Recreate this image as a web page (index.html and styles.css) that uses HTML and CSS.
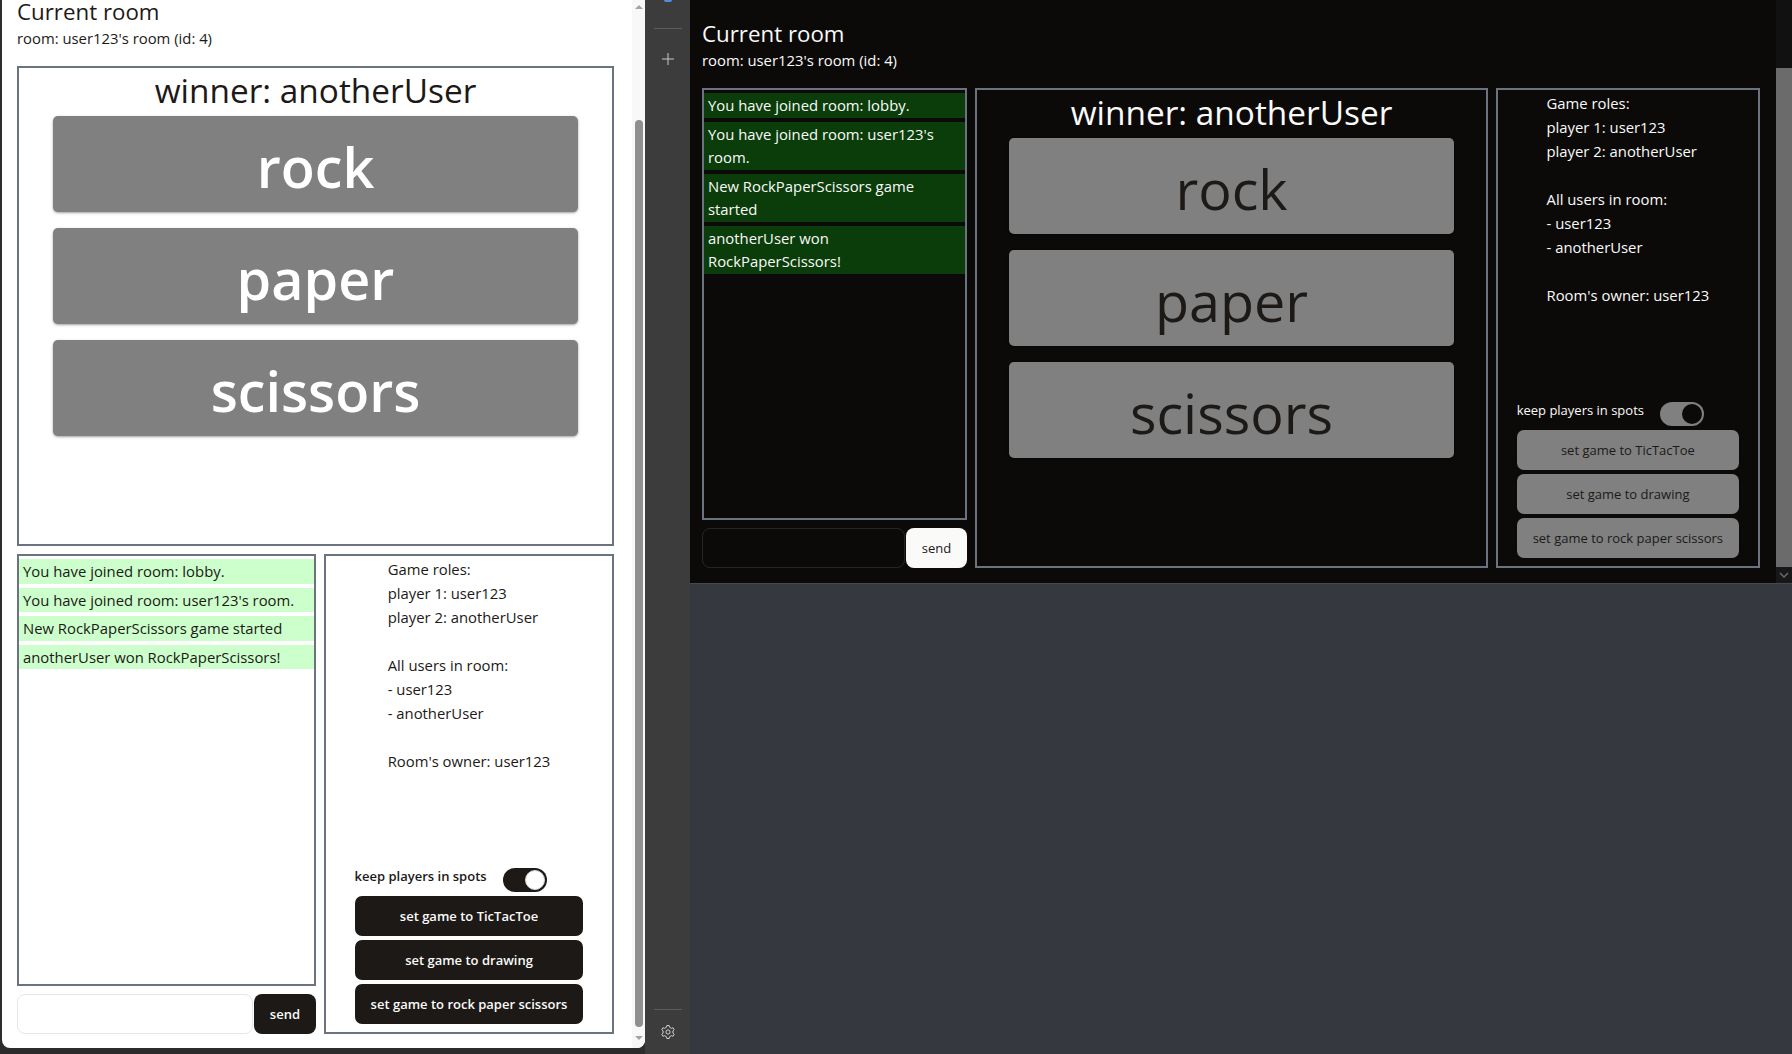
FILE: index.html
```html
<!DOCTYPE html>
<html lang="en">
<head>
<meta charset="utf-8">
<title>Current room</title>
<link rel="stylesheet" href="styles.css">
</head>
<body>
<div class="screen">
  <div class="left-wrap">
    <div class="left-panel">
      <div class="left-view">
        <div class="room room-light scrolled">
          <h1 class="room-title">Current room</h1>
          <div class="room-sub">room: user123's room (id: 4)</div>
          <div class="game-box">
            <div class="winner">winner: anotherUser</div>
            <button class="rps">rock</button>
            <button class="rps">paper</button>
            <button class="rps">scissors</button>
          </div>
          <div class="bottom-row">
            <div class="chat-col">
              <div class="chat-box">
                <div class="msg">You have joined room: lobby.</div>
                <div class="msg">You have joined room: user123's room.</div>
                <div class="msg">New RockPaperScissors game started</div>
                <div class="msg">anotherUser won RockPaperScissors!</div>
              </div>
              <div class="chat-input-row">
                <input class="chat-input" type="text">
                <button class="send">send</button>
              </div>
            </div>
            <div class="info-box">
              <div class="info-text">
                <div>Game roles:</div>
                <div>player 1: user123</div>
                <div>player 2: anotherUser</div>
                <div class="blank"></div>
                <div>All users in room:</div>
                <div>- user123</div>
                <div>- anotherUser</div>
                <div class="blank"></div>
                <div>Room's owner: user123</div>
              </div>
              <div class="controls">
                <div class="keep-row">
                  <span class="keep-label">keep players in spots</span>
                  <span class="toggle"><span class="knob"></span></span>
                </div>
                <button class="ctrl">set game to TicTacToe</button>
                <button class="ctrl">set game to drawing</button>
                <button class="ctrl">set game to rock paper scissors</button>
              </div>
            </div>
          </div>
        </div>
      </div>
      <div class="vscroll-light">
        <div class="sb-up"><span class="tri-up"></span></div>
        <div class="sb-thumb-light"></div>
        <div class="sb-down"><span class="tri-down"></span></div>
      </div>
    </div>
  </div>

  <div class="strip">
    <div class="strip-top-icon"></div>
    <div class="strip-divider top-div"></div>
    <svg class="strip-plus" width="14" height="14" viewBox="0 0 14 14"><path d="M7 1v12M1 7h12" stroke="#c8c8c8" stroke-width="1" fill="none"/></svg>
    <div class="strip-spacer"></div>
    <div class="strip-divider"></div>
    <svg class="strip-gear" width="16" height="16" viewBox="0 0 16 16"><path d="M6.455 3.245L6.854 1.5L9.146 1.5L9.545 3.245L11.345 4.285L13.056 3.756L14.204 5.743L12.89 6.96L12.89 9.04L14.204 10.257L13.056 12.244L11.345 11.715L9.545 12.755L9.146 14.5L6.854 14.5L6.455 12.755L4.655 11.715L2.944 12.244L1.796 10.257L3.11 9.04L3.11 6.96L1.796 5.743L2.944 3.756L4.655 4.285Z" fill="none" stroke="#cfcfcf" stroke-width="1" stroke-linejoin="round"/><circle cx="8" cy="8" r="2.1" fill="none" stroke="#cfcfcf" stroke-width="1"/></svg>
  </div>

  <div class="right-area">
    <div class="right-page">
      <div class="right-view">
        <div class="room room-dark">
          <h1 class="room-title">Current room</h1>
          <div class="room-sub">room: user123's room (id: 4)</div>
          <div class="main-row">
            <div class="chat-col">
              <div class="chat-box">
                <div class="msg">You have joined room: lobby.</div>
                <div class="msg">You have joined room: user123's room.</div>
                <div class="msg">New RockPaperScissors game started</div>
                <div class="msg">anotherUser won RockPaperScissors!</div>
              </div>
              <div class="chat-input-row">
                <input class="chat-input" type="text">
                <button class="send">send</button>
              </div>
            </div>
            <div class="game-box">
              <div class="winner">winner: anotherUser</div>
              <button class="rps">rock</button>
              <button class="rps">paper</button>
              <button class="rps">scissors</button>
            </div>
            <div class="info-box">
              <div class="info-text">
                <div>Game roles:</div>
                <div>player 1: user123</div>
                <div>player 2: anotherUser</div>
                <div class="blank"></div>
                <div>All users in room:</div>
                <div>- user123</div>
                <div>- anotherUser</div>
                <div class="blank"></div>
                <div>Room's owner: user123</div>
              </div>
              <div class="controls">
                <div class="keep-row">
                  <span class="keep-label">keep players in spots</span>
                  <span class="toggle"><span class="knob"></span></span>
                </div>
                <button class="ctrl">set game to TicTacToe</button>
                <button class="ctrl">set game to drawing</button>
                <button class="ctrl">set game to rock paper scissors</button>
              </div>
            </div>
          </div>
        </div>
      </div>
      <div class="vscroll-dark">
        <div class="sb-thumb-dark"></div>
        <div class="sb-arrow-dark">
          <svg width="10" height="6" viewBox="0 0 10 6"><path d="M1 1l4 4 4-4" stroke="#6a6a6a" stroke-width="1.5" fill="none"/></svg>
        </div>
      </div>
    </div>
  </div>
</div>
</body>
</html>
```

FILE: styles.css
```css
* { box-sizing: border-box; }

html, body {
  margin: 0;
  padding: 0;
}

body {
  width: 1792px;
  height: 1054px;
  overflow: hidden;
  background: #2c2c2c;
  font-family: "Open Sans", "Noto Sans", sans-serif;
}

.screen {
  display: flex;
  width: 1792px;
  height: 1054px;
}

/* ---------- left (light) pane ---------- */
.left-wrap {
  width: 645px;
  flex: none;
  padding-left: 2px;
  background: #2c2c2c;
}

.left-panel {
  height: 1048px;
  background: #ffffff;
  border-radius: 0 0 8px 8px;
  display: flex;
  overflow: hidden;
}

.left-view {
  flex: 1;
  min-width: 0;
  overflow: hidden;
  padding: 0 18px 0 15px;
}

.scrolled { margin-top: -6px; }

.vscroll-light {
  width: 13px;
  flex: none;
  background: #f8f8f8;
  display: flex;
  flex-direction: column;
  align-items: center;
}

.sb-up {
  height: 14px;
  display: flex;
  align-items: center;
  justify-content: center;
}

.tri-up {
  width: 0;
  height: 0;
  border-left: 4px solid transparent;
  border-right: 4px solid transparent;
  border-bottom: 4px solid #a3a3a3;
}

.sb-thumb-light {
  margin-top: 106px;
  width: 8px;
  height: 907px;
  border-radius: 4px;
  background: #8f8f8f;
}

.sb-down {
  flex: 1;
  display: flex;
  align-items: center;
  justify-content: center;
}

.tri-down {
  width: 0;
  height: 0;
  border-left: 4px solid transparent;
  border-right: 4px solid transparent;
  border-top: 4px solid #a3a3a3;
}

/* ---------- middle strip ---------- */
.strip {
  width: 45px;
  flex: none;
  background: #3c3c3c;
  display: flex;
  flex-direction: column;
  align-items: center;
}

.strip-top-icon {
  width: 8px;
  height: 2px;
  background: #4f8fe0;
  border-radius: 0 0 2px 2px;
}

.strip-divider {
  width: 28px;
  height: 1px;
  background: #5c5c5c;
  flex: none;
}

.top-div { margin-top: 26px; }

.strip-plus { margin-top: 23px; flex: none; }

.strip-spacer { flex: 1; }

.strip-gear {
  margin-top: 14px;
  margin-bottom: 14px;
  flex: none;
}

/* ---------- right (dark) pane ---------- */
.right-area {
  flex: 1;
  background: #35383f;
}

.right-page {
  height: 584px;
  background: #0c0a09;
  border-bottom: 1px solid #45484f;
  display: flex;
}

.right-view {
  flex: 1;
  min-width: 0;
  overflow: hidden;
  padding: 16px 16px 0 12px;
}

.vscroll-dark {
  width: 16px;
  flex: none;
  background: #111111;
  display: flex;
  flex-direction: column;
}

.sb-thumb-dark {
  margin-top: 68px;
  height: 499px;
  background: #6b6b6b;
}

.sb-arrow-dark {
  height: 16px;
  background: #17171a;
  display: flex;
  align-items: center;
  justify-content: center;
}

/* ---------- room component ---------- */
.room {
  font-size: 14.85px;
  line-height: 24px;
}

.room-title {
  margin: 0 0 -4px;
  font-size: 22.3px;
  line-height: 36px;
  font-weight: 400;
}

.room-sub {
  margin-bottom: 16px;
}

.game-box {
  height: 480px;
  border: 2px solid #6b7280;
  display: flex;
  flex-direction: column;
  min-width: 0;
}

.winner {
  text-align: center;
  font-size: 33.4px;
  line-height: 40px;
  padding-top: 2px;
  margin-bottom: -2px;
}

.rps {
  display: block;
  margin: 8px 32px;
  height: 96px;
  padding: 4px 0 0;
  border: 0;
  border-radius: 5px;
  font-family: inherit;
  font-size: 55.7px;
  line-height: 60px;
  background: #808080;
  box-shadow: 0 1px 3px 0 rgba(0, 0, 0, 0.3), 0 1px 2px -1px rgba(0, 0, 0, 0.3);
}

.bottom-row {
  display: grid;
  grid-template-columns: 299fr 290fr;
  gap: 8px;
  margin-top: 8px;
  height: 480px;
}

.main-row {
  display: grid;
  grid-template-columns: 265fr 512fr 264fr;
  gap: 8px;
  height: 480px;
}

.chat-col {
  display: flex;
  flex-direction: column;
  gap: 8px;
  min-width: 0;
}

.chat-box {
  flex: 1;
  border: 2px solid #6b7280;
  padding-top: 3px;
  overflow: hidden;
}

.msg {
  margin-bottom: 4px;
  padding: 1px 4px 0;
  height: auto;
  min-height: 24px;
  line-height: 23.5px;
}

.chat-input-row {
  display: flex;
  height: 40px;
  gap: 1px;
}

.chat-input {
  flex: 1;
  min-width: 0;
  height: 40px;
  border: 1px solid #e5e7eb;
  border-radius: 8px;
  background: transparent;
  outline: none;
  font-family: inherit;
}

.send {
  height: 40px;
  padding: 0 16px;
  border: 0;
  border-radius: 8px;
  font-family: inherit;
  font-size: 13px;
  line-height: 20px;
}

.info-box {
  border: 2px solid #6b7280;
  display: flex;
  flex-direction: column;
  justify-content: space-between;
  align-items: center;
  padding-bottom: 8px;
  min-width: 0;
}

.info-text { padding-top: 1px; }

.blank { height: 24px; }

.controls {
  display: flex;
  flex-direction: column;
  gap: 4px;
}

.keep-row {
  display: flex;
  align-items: flex-start;
  height: 24px;
}

.keep-label {
  font-size: 13px;
  line-height: 16px;
  margin-right: 16px;
}

.toggle {
  width: 44px;
  height: 24px;
  border-radius: 12px;
  padding: 2px;
  display: flex;
  justify-content: flex-end;
  align-items: center;
}

.knob {
  width: 20px;
  height: 20px;
  border-radius: 50%;
}

.ctrl {
  display: block;
  height: 40px;
  padding: 0 16px;
  border: 0;
  border-radius: 7px;
  font-family: inherit;
  font-size: 13px;
  line-height: 20px;
  white-space: nowrap;
}

/* ---------- light theme ---------- */
.room-light { color: #1c1917; }
.room-light .msg { background: #ccffcc; }
.room-light .rps { margin: 8px 34px; color: #ffffff; font-weight: 600; }
.room-light .send,
.room-light .ctrl { background: #1c1917; color: #fafaf9; font-weight: 600; }
.room-light .keep-label { font-weight: 600; }
.room-light .toggle { background: #1c1917; }
.room-light .knob { background: #ffffff; border: 1px solid #d4d4d4; }

/* ---------- dark theme ---------- */
.room-dark { color: #fafaf9; }
.room-dark .msg { background: #0b3d0b; }
.room-dark .rps { color: #1c1917; font-weight: 400; }
.room-dark .send { background: #fafaf9; color: #1c1917; }
.room-dark .ctrl { background: #808080; color: #1c1917; }
.room-dark .chat-input { border-color: #292524; }
.room-dark .toggle { background: #808080; }
.room-dark .knob { background: #0c0a09; }
```
